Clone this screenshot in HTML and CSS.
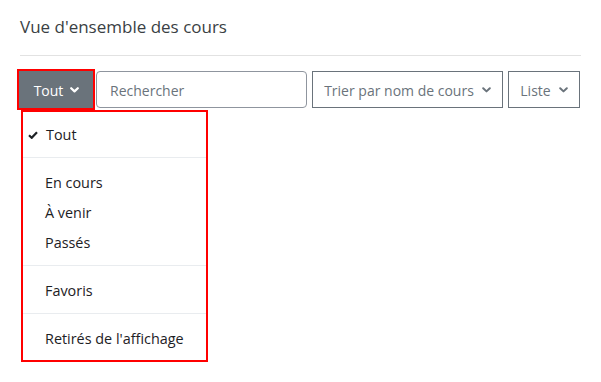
FILE: index.html
```html
<!DOCTYPE html>
<html lang="fr">
<head>
<meta charset="utf-8">
<link rel="stylesheet" href="styles.css">
</head>
<body>
<div class="card">
  <h5 class="title">Vue d'ensemble des cours</h5>
  <hr class="rule">
  <div class="toolbar">
    <button class="btn-filter">Tout <svg class="chev" width="9" height="6" viewBox="0 0 9 6"><path d="M1.2 1.2 L4.5 4.4 L7.8 1.2" fill="none" stroke="currentColor" stroke-width="2.2" stroke-linecap="round" stroke-linejoin="round"/></svg></button>
    <input class="search" type="text" placeholder="Rechercher">
    <button class="btn-outline sort">Trier par nom de cours <svg class="chev" width="9" height="6" viewBox="0 0 9 6"><path d="M1.2 1.2 L4.5 4.4 L7.8 1.2" fill="none" stroke="currentColor" stroke-width="2" stroke-linecap="round" stroke-linejoin="round"/></svg></button>
    <button class="btn-outline view">Liste <svg class="chev" width="9" height="6" viewBox="0 0 9 6"><path d="M1.2 1.2 L4.5 4.4 L7.8 1.2" fill="none" stroke="currentColor" stroke-width="2" stroke-linecap="round" stroke-linejoin="round"/></svg></button>
  </div>
  <ul class="dropdown-list">
    <li class="item active"><svg class="check" width="10" height="8" viewBox="0 0 10 8"><path d="M1 4.2 L3.7 6.8 L9 1.2" fill="none" stroke="currentColor" stroke-width="2.2" stroke-linejoin="miter"/></svg>Tout</li>
    <li class="divider"></li>
    <li class="item">En cours</li>
    <li class="item">À venir</li>
    <li class="item">Passés</li>
    <li class="divider"></li>
    <li class="item">Favoris</li>
    <li class="divider"></li>
    <li class="item">Retirés de l'affichage</li>
  </ul>
</div>
</body>
</html>
```

FILE: styles.css
```css
* { box-sizing: border-box; }
html, body { margin: 0; padding: 0; background: #fff; }
body {
  font-family: "Open Sans", "Noto Sans", "DejaVu Sans", sans-serif;
  font-size: 14px;
  color: #1d2125;
}
.card { padding: 16px 20px 0 20px; }
.title {
  margin: 0;
  font-size: 17px;
  font-weight: 400;
  line-height: 22px;
  color: #3a3f44;
}
.rule {
  margin: 17px 0 0 0;
  border: 0;
  border-top: 1px solid #e2e2e2;
}
.toolbar {
  margin-top: 15px;
  margin-left: -1px;
  display: flex;
  align-items: stretch;
  height: 37px;
}
.btn-filter {
  width: 74px;
  height: 37px;
  background: #6a737b;
  color: #fff;
  border: 1px solid #6a737b;
  border-radius: 0;
  font: inherit;
  font-size: 14px;
  display: flex;
  align-items: center;
  justify-content: center;
  gap: 7px;
  padding: 2px 0 0 1px;
  outline: 2px solid #f00;
  outline-offset: 0;
  position: relative;
  z-index: 1;
}
.btn-filter .chev { margin-top: -1px; }
.dropdown-list {
  margin: 2px 0 0 1px;
  width: 187px;
  height: 252px;
  list-style: none;
  border: 2px solid #f00;
  background: #fff;
  padding: 7px 0 8px 0;
}
.item {
  height: 30px;
  padding: 1px 0 0 22px;
  white-space: nowrap;
  display: flex;
  align-items: center;
  color: #1d2125;
  font-size: 14.4px;
}
.check { margin-left: -17px; margin-right: 8px; color: #1d2125; }
.divider {
  height: 1px;
  background: #e9ecef;
  margin: 8px 0 9px 0;
}
.search {
  margin-left: 3px;
  width: 211px;
  height: 37px;
  border: 1px solid #8f959e;
  border-radius: 4px;
  padding: 2px 13px 0 13px;
  font: inherit;
  font-size: 14px;
  color: #1d2125;
  outline: none;
}
.search::placeholder { color: #6a737b; opacity: 1; }
.btn-outline {
  margin-left: 5px;
  height: 37px;
  background: #fff;
  color: #6a737b;
  border: 1px solid #6a737b;
  border-radius: 0;
  font: inherit;
  font-size: 14px;
  display: flex;
  align-items: center;
  justify-content: center;
  gap: 8px;
  padding: 2px 0 0 0;
}
.btn-outline .chev { margin-top: -1px; }
.sort { width: 191px; }
.view { width: 72px; }
.chev { display: block; }
```
